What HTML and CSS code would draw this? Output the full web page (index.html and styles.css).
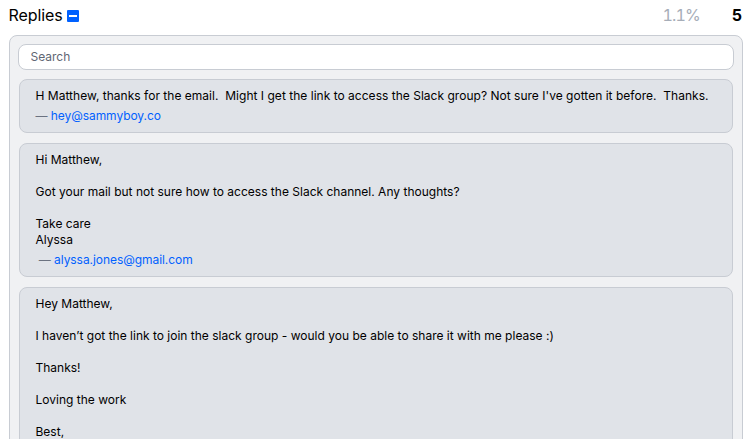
FILE: index.html
```
<!DOCTYPE html>
<html lang="en">
<head>
    <meta charset="UTF-8">
    <meta name="viewport" content="width=device-width, initial-scale=1.0">
    <title>Replies</title>
    <link rel="stylesheet" href="styles.css">
</head>
<body>
    <div class="header">
        <div class="title">Replies</div>
        <button class="toggle" aria-label="Collapse replies">
            <svg width="12" height="12" viewBox="0 0 12 12"><rect width="12" height="12" rx="1" fill="#0061ff"/><rect x="2" y="5" width="8" height="2" fill="#fff"/></svg>
        </button>
        <div class="percent">1.1%</div>
        <div class="count">5</div>
    </div>

    <div class="panel">
        <input class="search" type="text" placeholder="Search">

        <div class="reply">
            <div class="message wide">H Matthew, thanks for the email.  Might I get the link to access the Slack group? Not sure I've gotten it before.  Thanks.</div>
            <div class="from">— <a href="#">hey@sammyboy.co</a></div>
        </div>

        <div class="reply">
            <div class="message">Hi Matthew,

Got your mail but not sure how to access the Slack channel. Any thoughts?

Take care
Alyssa</div>
            <div class="from">&nbsp;— <a href="#">alyssa.jones@gmail.com</a></div>
        </div>

        <div class="reply">
            <div class="message">Hey Matthew,

I haven’t got the link to join the slack group - would you be able to share it with me please :)

Thanks!

Loving the work

Best,</div>
        </div>
    </div>
</body>
</html>
```
FILE: styles.css
```
* {
    box-sizing: border-box;
}
body {
    font-family: Inter, sans-serif;
    font-size: 12px;
    line-height: 16px;
    margin: 0;
    height: 439px;
    overflow: hidden;
    background-color: #fff;
    color: #000;
}
.header {
    display: flex;
    align-items: center;
    height: 35px;
    padding: 0 14px 5px 8.5px;
    font-size: 16px;
    line-height: 24px;
}
.title {
    letter-spacing: -0.1px;
}
.toggle {
    display: flex;
    margin: 2px 0 0 4px;
    padding: 0;
    border: 0;
    background: none;
    cursor: pointer;
}
.percent {
    margin-left: auto;
    color: #a6adb8;
    font-variant-numeric: tabular-nums;
    letter-spacing: -0.8px;
}
.count {
    width: 42px;
    font-weight: 700;
    text-align: right;
}
.panel {
    height: 420px;
    margin: 0 13px 0 9px;
    padding: 8px 9px;
    background-color: #f0f1f3;
    border: 1px solid #c8ccd3;
    border-radius: 8px;
}
.search {
    display: block;
    width: calc(100% + 2px);
    height: 26px;
    margin: 0 -1px 9px;
    padding: 0 11.5px 1px;
    font-family: inherit;
    font-size: 12px;
    background-color: #fff;
    border: 1px solid #c8ccd3;
    border-radius: 8px;
}
.search::placeholder {
    color: #5f6673;
}
.reply {
    margin-bottom: 10px;
    padding: 8px 15.5px;
    background-color: #e0e3e8;
    border: 1px solid #c8ccd3;
    border-radius: 8px;
}
.message {
    white-space: pre-wrap;
    letter-spacing: 0.005px;
}
.wide {
    letter-spacing: 0.02px;
}
.from {
    margin-top: 4px;
    color: #6b7280;
    letter-spacing: -0.06px;
}
.from a {
    color: #0061ff;
    text-decoration: none;
}
```
